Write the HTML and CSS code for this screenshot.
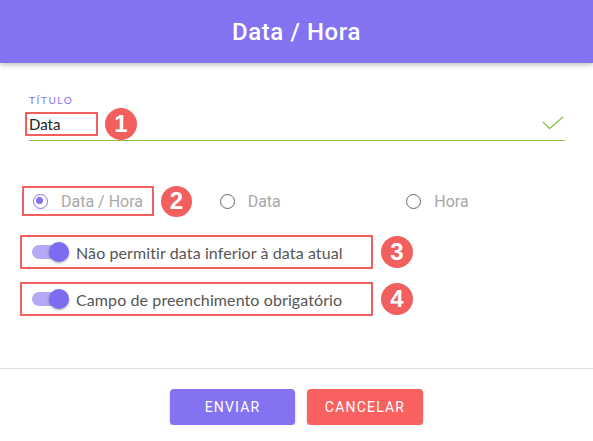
FILE: index.html
```html
<!DOCTYPE HTML>
<html>
	<head>
		<title>Data / Hora</title>
		<meta charset="UTF-8">
		<link rel="stylesheet" href="styles.css">
	</head>
	<body>
		<div class="dialog">
			<div class="dialog_title">Data / Hora</div>

			<div class="dialog_content">
				<div class="field">
					<div class="field_label">Título</div>
					<div class="field_row">
						<span class="mark mark_input">Data</span>
						<span class="badge">1</span>
						<svg class="check" width="22" height="14" viewBox="0 0 22 14">
							<path d="M1 6 L7.5 12.5 L21 1" fill="none" stroke="#8bc34a" stroke-width="1.3"/>
						</svg>
					</div>
				</div>

				<div class="radios">
					<div class="radio_cell">
						<span class="mark radio_item">
							<span class="radio checked"></span>
							<span class="radio_text">Data / Hora</span>
						</span>
						<span class="badge">2</span>
					</div>
					<div class="radio_cell">
						<span class="radio_item">
							<span class="radio"></span>
							<span class="radio_text">Data</span>
						</span>
					</div>
					<div class="radio_cell">
						<span class="radio_item">
							<span class="radio"></span>
							<span class="radio_text">Hora</span>
						</span>
					</div>
				</div>

				<div class="toggle_row">
					<span class="mark toggle_item">
						<span class="toggle"><span class="knob"></span></span>
						<span class="toggle_text">Não permitir data inferior à data atual</span>
					</span>
					<span class="badge">3</span>
				</div>
				<div class="toggle_row">
					<span class="mark toggle_item">
						<span class="toggle"><span class="knob"></span></span>
						<span class="toggle_text">Campo de preenchimento obrigatório</span>
					</span>
					<span class="badge">4</span>
				</div>
			</div>

			<div class="dialog_actions">
				<button class="btn btn_send">Enviar</button>
				<button class="btn btn_cancel">Cancelar</button>
			</div>
		</div>
	</body>
</html>
```

FILE: styles.css
```css
body
	{
		margin: 0;
		background: #fff;
		font-family: Lato, "Open Sans", sans-serif;
	}

.dialog_title
	{
		height: 63px;
		display: flex;
		align-items: center;
		justify-content: center;
		background: #8473f1;
		color: #fff;
		font-family: Roboto, "Liberation Sans", sans-serif;
		font-weight: 500;
		font-size: 24px;
		letter-spacing: 0.6px;
		box-shadow: 0 2px 5px rgba(0, 0, 0, 0.25);
		position: relative;
	}

.dialog_content
	{
		padding: 32px 11px 52px 22px;
	}

.field
	{
		margin: 0 17px 0 7px;
	}
.field_label
	{
		font-size: 10px;
		line-height: 11px;
		height: 11px;
		letter-spacing: 1.6px;
		text-transform: uppercase;
		color: #8473f1;
		margin-bottom: 2px;
	}
.field_row
	{
		height: 32px;
		display: flex;
		align-items: center;
		border-bottom: 1.5px solid #8bc34a;
	}

.mark
	{
		border: 2px solid #f25f5f;
		box-sizing: border-box;
	}
.mark_input
	{
		margin-left: -4px;
		width: 73px;
		height: 24px;
		padding-left: 2px;
		font-size: 15px;
		line-height: 20px;
		color: #222;
	}

.badge
	{
		width: 32px;
		height: 32px;
		border-radius: 50%;
		background: #f25f5f;
		color: #fff;
		font-family: "Liberation Sans", Arial, sans-serif;
		font-weight: bold;
		font-size: 24px;
		display: flex;
		align-items: center;
		justify-content: center;
		flex-shrink: 0;
	}
.field_row .badge
	{
		margin-left: 7px;
	}
.check
	{
		margin-left: auto;
		margin-right: 1px;
		margin-top: -2px;
	}

.radios
	{
		margin-top: 44px;
		display: grid;
		grid-template-columns: repeat(3, 1fr);
		height: 32px;
	}
.radio_cell
	{
		display: flex;
		align-items: center;
	}
.radio_item
	{
		display: flex;
		align-items: center;
		gap: 13px;
		height: 30px;
		padding: 0 0 0 9px;
		border: 2px solid transparent;
		box-sizing: border-box;
		white-space: nowrap;
	}
.radio_item.mark
	{
		border-color: #f25f5f;
		width: 132px;
	}
.radio_cell .badge
	{
		margin-left: 7px;
		width: 31px;
		height: 31px;
	}
.radio
	{
		width: 15px;
		height: 15px;
		border: 1.6px solid #666;
		border-radius: 50%;
		box-sizing: border-box;
		position: relative;
		flex-shrink: 0;
	}
.radio.checked
	{
		border-color: #8473f1;
	}
.radio.checked::after
	{
		content: "";
		position: absolute;
		left: 2.2px;
		top: 2.2px;
		width: 7px;
		height: 7px;
		border-radius: 50%;
		background: #8473f1;
	}
.radio_text
	{
		font-family: Roboto, "Liberation Sans", sans-serif;
		font-size: 16px;
		color: #a9a9a9;
	}

.toggle_row
	{
		display: flex;
		align-items: center;
		margin-left: -2px;
		margin-top: 18px;
	}
.toggle_row + .toggle_row
	{
		margin-top: 13px;
	}
.toggle_item
	{
		width: 353px;
		height: 34px;
		display: flex;
		align-items: center;
		padding-left: 10px;
		white-space: nowrap;
	}
.toggle_row .badge
	{
		margin-left: 8px;
	}
.toggle
	{
		width: 34px;
		height: 14px;
		border-radius: 7px;
		background: #b3a9f6;
		position: relative;
		margin-right: 10px;
		flex-shrink: 0;
	}
.knob
	{
		position: absolute;
		left: 17px;
		top: -3px;
		width: 20px;
		height: 20px;
		border-radius: 50%;
		background: #7b6cf0;
		box-shadow: 0 1px 3px rgba(0, 0, 0, 0.35);
	}
.toggle_text
	{
		font-size: 16px;
		letter-spacing: 0.1px;
		color: #555;
	}

.dialog_actions
	{
		border-top: 1px solid #e0e0e0;
		padding-top: 20px;
		display: flex;
		justify-content: center;
		gap: 12px;
	}
.btn
	{
		height: 36px;
		border: none;
		border-radius: 4px;
		color: #fff;
		font-family: Roboto, "Liberation Sans", sans-serif;
		font-size: 14px;
		letter-spacing: 1.2px;
		text-transform: uppercase;
		box-shadow: 0 2px 3px rgba(0, 0, 0, 0.2);
	}
.btn_send
	{
		width: 125px;
		background: #8473f1;
	}
.btn_cancel
	{
		width: 116px;
		background: #f96060;
	}
```
